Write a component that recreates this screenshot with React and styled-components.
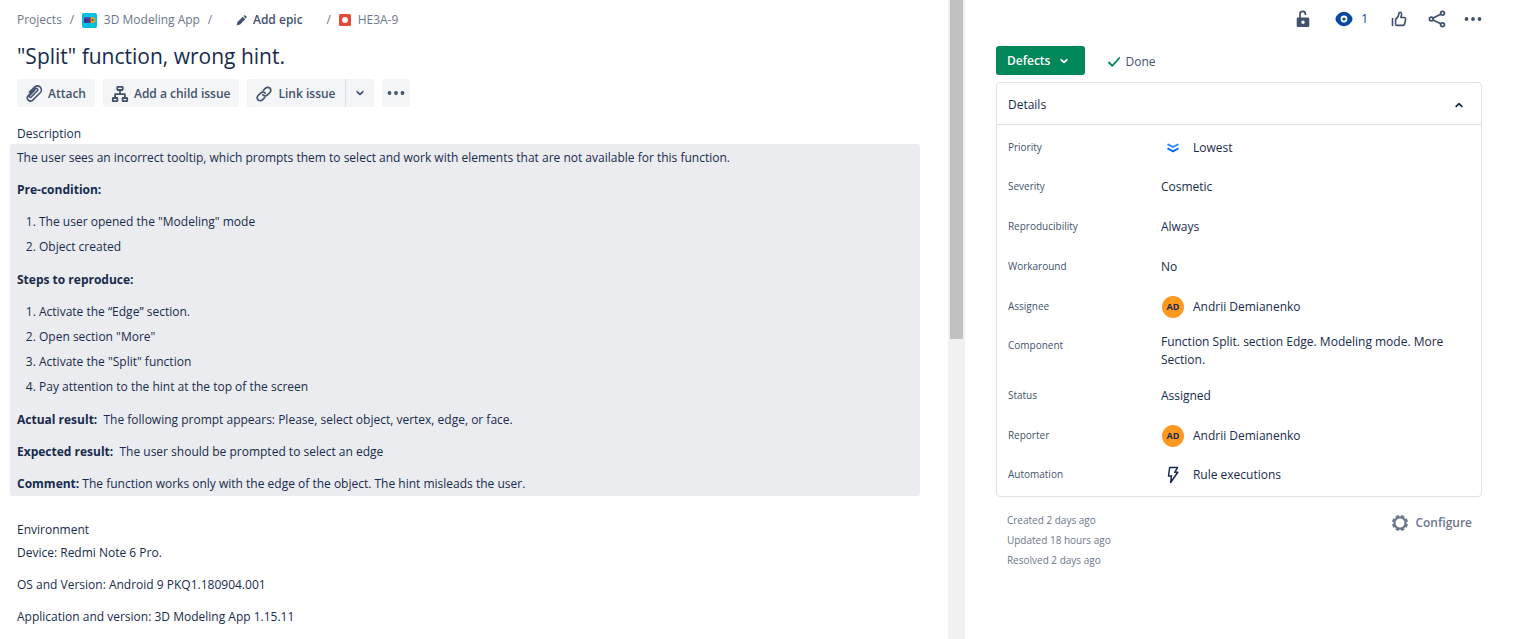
import React from "react";
import styled, { createGlobalStyle } from "styled-components";

const GlobalStyle = createGlobalStyle`
  *, *::before, *::after { box-sizing: border-box; }
  body {
    margin: 0;
    background: #fff;
    color: #172b4d;
    font-family: "Open Sans", "Noto Sans", sans-serif;
    font-size: 12px;
    line-height: 20px;
  }
  h1, h2, p, ol, dl, dd { margin: 0; padding: 0; }
  button { font: inherit; color: inherit; border: 0; background: none; padding: 0; cursor: pointer; }
  a { color: inherit; text-decoration: none; }
  svg { display: block; flex: none; }
`;

const Page = styled.div`
  display: grid;
  grid-template-columns: minmax(0, 39fr) 17px minmax(0, 23fr);
  height: 100vh;
  overflow: hidden;
`;

const Main = styled.main`
  padding: 10px 28px 0 17px;
  overflow: hidden;
`;

const ScrollTrack = styled.div`
  background: #f1f1f1;
  padding: 0 2px;
`;

const ScrollThumb = styled.div`
  height: 53%;
  background: #c1c1c1;
`;

const Side = styled.aside`
  padding: 7px 42px 0 31px;
  overflow: hidden;
`;

const Breadcrumbs = styled.nav`
  display: flex;
  align-items: center;
  height: 20px;
  color: #6b778c;
`;

const Crumb = styled.a`
  display: flex;
  align-items: center;
  gap: 7px;
`;

const Slash = styled.span`
  width: 20px;
  text-align: center;
`;

const EpicButton = styled.button`
  display: flex;
  align-items: center;
  gap: 6px;
  margin: 0 16px;
  color: #42526e;
  font-weight: 600;
`;

const Title = styled.h1`
  margin-top: 12px;
  font-size: 21px;
  font-weight: 500;
  line-height: 28px;
`;

const Toolbar = styled.div`
  display: flex;
  gap: 8px;
  margin-top: 9px;
`;

const ToolButton = styled.button`
  display: flex;
  align-items: center;
  justify-content: center;
  gap: 5px;
  height: 28px;
  min-width: 28px;
  padding: ${(p) => (p.$compact ? "0" : "1px 9px 0 8px")};
  border-radius: 3px;
  background: #f4f5f7;
  color: #42526e;
  font-weight: 600;
`;

const SplitButton = styled.div`
  display: flex;
  gap: 1px;
  border-radius: 3px;
  overflow: hidden;
  background: #dcdfe4;

  ${ToolButton} { border-radius: 0; }
`;

const SectionTitle = styled.h2`
  margin-top: ${(p) => p.$space}px;
  font-size: 12px;
  font-weight: 500;
  line-height: 20px;
`;

const DescriptionBox = styled.section`
  margin: 0 0 0 -7px;
  padding: 4px 7px 2px;
  border-radius: 3px;
  background: #ebecf0;
`;

const Para = styled.p`
  & + &, ol + & { margin-top: 12px; }
  strong { font-weight: 700; }
`;

const Steps = styled.ol`
  margin: 12px 0 13px;
  padding-left: 22px;

  li + li { margin-top: 5px; }
`;

const Environment = styled.section`
  margin-top: 3px;
`;

const Actions = styled.div`
  display: flex;
  justify-content: flex-end;
  align-items: center;
  height: 24px;
  color: #42526e;
`;

const IconButton = styled.button`
  display: flex;
  align-items: center;
  gap: 8px;
  margin-left: ${(p) => p.$space || 0}px;
  color: ${(p) => (p.$active ? "#0747a6" : "inherit")};
`;

const StatusRow = styled.div`
  display: flex;
  align-items: center;
  gap: 22px;
  margin-top: 15px;
`;

const StatusButton = styled.button`
  display: flex;
  align-items: center;
  gap: 9px;
  height: 29px;
  padding: 0 16px 0 11px;
  border-radius: 3px;
  background: #00875a;
  color: #fff;
  font-weight: 600;
`;

const Resolution = styled.span`
  display: flex;
  align-items: center;
  gap: 4px;
  padding-top: 2px;
  color: #42526e;
`;

const Card = styled.section`
  margin-top: 7px;
  border: 1px solid #dfe1e6;
  border-radius: 4px;
`;

const CardHeader = styled.header`
  display: flex;
  align-items: center;
  justify-content: space-between;
  height: 42px;
  padding: 2px 17px 0 11px;
  border-bottom: 1px solid #dfe1e6;

  h2 { font-size: 12px; font-weight: 500; }
`;

const Fields = styled.dl`
  padding: 2px 11px 3px;
`;

const Field = styled.div`
  display: grid;
  grid-template-columns: 153px minmax(0, 1fr);
  align-items: center;
  min-height: ${(p) => (p.$media ? 39 : 40)}px;
  padding: ${(p) => (p.$tall ? 6 : 0)}px 0;
`;

const FieldLabel = styled.dt`
  align-self: ${(p) => (p.$tall ? "start" : "center")};
  padding-top: ${(p) => (p.$tall ? 4 : 0)}px;
  color: #42526e;
  font-size: 10px;
  font-weight: 500;
`;

const FieldValue = styled.dd`
  display: flex;
  align-items: center;
  gap: 8px;
  padding-top: 2px;
  line-height: 18px;
`;

const IconSlot = styled.span`
  display: flex;
  justify-content: center;
  width: 24px;
  flex: none;
`;

const Avatar = styled.span`
  width: 22px;
  height: 22px;
  border-radius: 50%;
  background: #ff991f;
  color: #172b4d;
  font-size: 9px;
  font-weight: 700;
  line-height: 22px;
  text-align: center;
`;

const Footer = styled.footer`
  display: flex;
  justify-content: space-between;
  align-items: flex-start;
  padding: 13px 10px 0 11px;
  color: #6b778c;
`;

const Dates = styled.div`
  font-size: 10px;
`;

const ConfigureButton = styled.button`
  display: flex;
  align-items: center;
  gap: 6px;
  padding-top: 3px;
  font-weight: 600;
`;

const Stroke = ({ w, h = w, box, sw = 2, children }) => (
  <svg width={w} height={h} viewBox={box} fill="none" stroke="currentColor" strokeWidth={sw} strokeLinecap="round" strokeLinejoin="round" aria-hidden="true">
    {children}
  </svg>
);

const ProjectIcon = () => (
  <svg width="15" height="15" viewBox="0 0 15 15" aria-hidden="true">
    <rect width="15" height="15" rx="2" fill="#00c1e0" />
    <rect x="2" y="4.500" width="7" height="5.500" rx=".8" fill="#403294" />
    <rect x="2" y="4.500" width="7" height="1.800" fill="#5243aa" />
    <path d="M8.500 4.200h2a2.900 2.900 0 0 1 0 5.800h-2z" fill="#e5a51b" />
    <rect x="7.700" y="4.500" width=".9" height="5.500" fill="#c0392b" />
    <circle cx="10.600" cy="7.100" r="1.200" fill="#5d5a42" />
  </svg>
);

const BugIcon = () => (
  <svg width="12" height="12" viewBox="0 0 12 12" aria-hidden="true">
    <rect width="12" height="12" rx="1.500" fill="#e5493a" />
    <circle cx="6" cy="6" r="2.900" fill="#fff" />
  </svg>
);

const PencilIcon = () => (
  <svg width="11" height="11" viewBox="0 0 11 11" fill="currentColor" aria-hidden="true">
    <path d="M7.400 1.100 8 .6a1 1 0 0 1 1.400 0l1 1a1 1 0 0 1 0 1.400l-.6.6zM6.700 1.800l2.500 2.500L4.100 9.400 1 10.300c-.3.100-.5-.1-.4-.4l.9-2.900z" />
  </svg>
);

const AttachIcon = () => (
  <Stroke w={18} box="0 0 18 18" sw={1.6}>
    <path d="M6 12.200 12.400 5.800a1.500 1.500 0 0 0-2.100-2.100L3.300 10.600a3.200 3.200 0 0 0 0 4.500 3.200 3.200 0 0 0 4.500 0l7.400-7.300a4.100 4.100 0 0 0 0-5.700 4.100 4.100 0 0 0-5.600 0L4.500 7.100M6 12.200a1.200 1.200 0 0 1-1.600-1.600L9.700 5.300" />
  </Stroke>
);

const ChildIcon = () => (
  <Stroke w={18} box="0 0 18 18" sw={1.8}>
    <rect x="6.300" y="1.800" width="5.400" height="3.200" rx=".4" />
    <rect x="1.800" y="13" width="4.600" height="3.200" rx=".4" />
    <rect x="11.600" y="13" width="4.600" height="3.200" rx=".4" />
    <path d="M9 5v4M4.100 13V9.200h9.800V13" />
  </Stroke>
);

const LinkIcon = () => (
  <Stroke w={18} box="0 0 18 18" sw={1.7}>
    <path d="m8.300 5.500 2.300-2.300a3 3 0 0 1 4.300 0 3 3 0 0 1 0 4.300l-2.800 2.700a2.900 2.900 0 0 1-4.300-.4" />
    <path d="m9.700 12.500-2.300 2.300a3 3 0 0 1-4.300 0 3 3 0 0 1 0-4.300l2.800-2.700a2.900 2.900 0 0 1 4.300.4" />
  </Stroke>
);

const Chevron = ({ up }) => (
  <Stroke w={10} box="0 0 10 10" sw={1.8}>
    <path d={up ? "m2.200 6.300 2.800-2.600 2.800 2.600" : "m2.200 3.800 2.800 2.600 2.800-2.600"} />
  </Stroke>
);

const MoreIcon = () => (
  <svg width="18" height="6" viewBox="0 0 18 6" fill="currentColor" aria-hidden="true">
    <circle cx="2.500" cy="3" r="1.900" />
    <circle cx="9" cy="3" r="1.900" />
    <circle cx="15.500" cy="3" r="1.900" />
  </svg>
);

const LockIcon = () => (
  <svg width="14" height="18" viewBox="0 0 14 18" aria-hidden="true">
    <path d="M4 8V4.300a2.700 2.700 0 0 1 5.400-.4v1" fill="none" stroke="currentColor" strokeWidth="1.700" />
    <path fill="currentColor" fillRule="evenodd" d="M2 7.500h10a1.300 1.300 0 0 1 1.300 1.300v7A1.300 1.300 0 0 1 12 17.100H2A1.300 1.300 0 0 1 .7 15.800v-7A1.300 1.300 0 0 1 2 7.500zm5 3.100a1.700 1.700 0 1 0 0 3.400 1.700 1.700 0 0 0 0-3.400z" />
  </svg>
);

const EyeIcon = () => (
  <svg width="18" height="16" viewBox="0 0 18 16" aria-hidden="true">
    <path d="M9 .8c4.600 0 8 4.300 8.400 6.500.1.500.1.900 0 1.400C17 10.900 13.600 15.200 9 15.200S1 10.900.6 8.700a3 3 0 0 1 0-1.400C1 5.100 4.400.8 9 .8z" fill="currentColor" />
    <circle cx="9" cy="8" r="2.500" fill="none" stroke="#fff" strokeWidth="1.800" />
  </svg>
);

const ThumbIcon = () => (
  <Stroke w={16} box="0 0 16 16" sw={1.6}>
    <path d="M1.500 7.500v7" />
    <path d="M4.600 8.200c2-1.200 3-3 3.300-5.500.1-1.100.6-1.600 1.300-1.500 1.300.2 1.600 1.600 1.200 3.200l-.5 2.100h3.300c1 0 1.600.7 1.400 1.600l-1 4.900c-.2.900-.8 1.400-1.600 1.400H6c-.9 0-1.400-.5-1.400-1.400z" />
  </Stroke>
);

const ShareIcon = () => (
  <Stroke w={18} box="0 0 18 18" sw={1.7}>
    <circle cx="3.300" cy="9" r="1.900" />
    <circle cx="14.500" cy="3.300" r="1.900" />
    <circle cx="14.500" cy="14.700" r="1.900" />
    <path d="m5.100 8.100 7.600-3.900M5.100 9.900l7.600 3.900" />
  </Stroke>
);

const CheckIcon = () => (
  <Stroke w={14} h={12} box="0 0 14 12" sw={1.8}>
    <path d="m2 6.500 3.200 3.300L12.300 2" stroke="#00875a" />
  </Stroke>
);

const LowestIcon = () => (
  <Stroke w={12} h={10} box="0 0 12 10" sw={1.8}>
    <path d="M1.200 1.500 6 4l4.800-2.500" stroke="#2684ff" />
    <path d="M1.200 5.800 6 8.400l4.800-2.600" stroke="#0065ff" />
  </Stroke>
);

const BoltIcon = () => (
  <Stroke w={12} h={18} box="0 0 12 18" sw={1.5}>
    <path d="M2.700 1.500h7.800L7.800 6.300h3L3.600 16.500 4.500 10H1.500z" />
  </Stroke>
);

const GearIcon = () => (
  <svg width="18" height="18" viewBox="0 0 18 18" fill="none" stroke="currentColor" aria-hidden="true">
    <circle cx="9" cy="9" r="5.600" strokeWidth="2.200" />
    <g strokeWidth="3.400">
      {[0, 45, 90, 135, 180, 225, 270, 315].map((a) => (
        <path key={a} d="M9 3V1" transform={`rotate(${a + 22.5} 9 9)`} />
      ))}
    </g>
  </svg>
);

const fields = [
  { label: "Priority", value: "Lowest", media: <LowestIcon /> },
  { label: "Severity", value: "Cosmetic" },
  { label: "Reproducibility", value: "Always" },
  { label: "Workaround", value: "No" },
  { label: "Assignee", value: "Andrii Demianenko", media: <Avatar>AD</Avatar> },
  { label: "Component", value: "Function Split. section Edge. Modeling mode. More Section.", tall: true },
  { label: "Status", value: "Assigned" },
  { label: "Reporter", value: "Andrii Demianenko", media: <Avatar>AD</Avatar> },
  { label: "Automation", value: "Rule executions", media: <BoltIcon /> },
];

export default function App() {
  return (
    <Page>
      <GlobalStyle />
      <Main>
        <Breadcrumbs aria-label="Breadcrumbs">
          <Crumb href="#projects">Projects</Crumb>
          <Slash>/</Slash>
          <Crumb href="#project"><ProjectIcon />3D Modeling App</Crumb>
          <Slash>/</Slash>
          <EpicButton type="button"><PencilIcon />Add epic</EpicButton>
          <Slash>/</Slash>
          <Crumb href="#issue"><BugIcon />HE3A-9</Crumb>
        </Breadcrumbs>
        <Title>"Split" function, wrong hint.</Title>
        <Toolbar>
          <ToolButton type="button"><AttachIcon />Attach</ToolButton>
          <ToolButton type="button"><ChildIcon />Add a child issue</ToolButton>
          <SplitButton>
            <ToolButton type="button"><LinkIcon />Link issue</ToolButton>
            <ToolButton type="button" $compact aria-label="More link options"><Chevron /></ToolButton>
          </SplitButton>
          <ToolButton type="button" $compact aria-label="More actions"><MoreIcon /></ToolButton>
        </Toolbar>

        <SectionTitle $space={17}>Description</SectionTitle>
        <DescriptionBox>
          <Para>The user sees an incorrect tooltip, which prompts them to select and work with elements that are not available for this function.</Para>
          <Para><strong>Pre-condition:</strong></Para>
          <Steps>
            <li>The user opened the "Modeling" mode</li>
            <li>Object created</li>
          </Steps>
          <Para><strong>Steps to reproduce:</strong></Para>
          <Steps>
            <li>Activate the “Edge” section.</li>
            <li>Open section "More"</li>
            <li>Activate the "Split" function</li>
            <li>Pay attention to the hint at the top of the screen</li>
          </Steps>
          <Para><strong>Actual result:</strong>&nbsp; The following prompt appears: Please, select object, vertex, edge, or face.</Para>
          <Para><strong>Expected result:</strong>&nbsp; The user should be prompted to select an edge</Para>
          <Para><strong>Comment:</strong> The function works only with the edge of the object. The hint misleads the user.</Para>
        </DescriptionBox>

        <SectionTitle $space={24}>Environment</SectionTitle>
        <Environment>
          <Para>Device: Redmi Note 6 Pro.</Para>
          <Para>OS and Version: Android 9 PKQ1.180904.001</Para>
          <Para>Application and version: 3D Modeling App 1.15.11</Para>
        </Environment>
      </Main>

      <ScrollTrack><ScrollThumb /></ScrollTrack>

      <Side>
        <Actions>
          <IconButton type="button" aria-label="Unlocked"><LockIcon /></IconButton>
          <IconButton type="button" $space={25} $active aria-label="Watchers"><EyeIcon />1</IconButton>
          <IconButton type="button" $space={23} aria-label="Vote"><ThumbIcon /></IconButton>
          <IconButton type="button" $space={21} aria-label="Share"><ShareIcon /></IconButton>
          <IconButton type="button" $space={18} aria-label="More"><MoreIcon /></IconButton>
        </Actions>
        <StatusRow>
          <StatusButton type="button">Defects<Chevron /></StatusButton>
          <Resolution><CheckIcon />Done</Resolution>
        </StatusRow>
        <Card>
          <CardHeader>
            <h2>Details</h2>
            <IconButton type="button" aria-label="Collapse details"><Chevron up /></IconButton>
          </CardHeader>
          <Fields>
            {fields.map((f) => (
              <Field key={f.label} $media={!!f.media} $tall={f.tall}>
                <FieldLabel $tall={f.tall}>{f.label}</FieldLabel>
                <FieldValue>
                  {f.media && <IconSlot>{f.media}</IconSlot>}
                  {f.value}
                </FieldValue>
              </Field>
            ))}
          </Fields>
        </Card>
        <Footer>
          <Dates>
            <p>Created 2 days ago</p>
            <p>Updated 18 hours ago</p>
            <p>Resolved 2 days ago</p>
          </Dates>
          <ConfigureButton type="button"><GearIcon />Configure</ConfigureButton>
        </Footer>
      </Side>
    </Page>
  );
}
